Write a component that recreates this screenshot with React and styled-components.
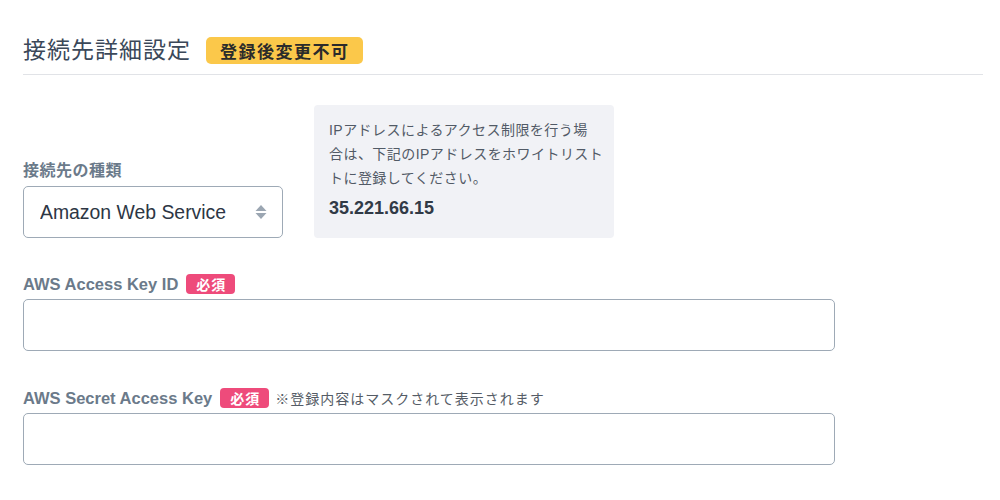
import React from "react";
import styled, { createGlobalStyle } from "styled-components";

const GlobalStyle = createGlobalStyle`
  html, body {
    margin: 0;
    padding: 0;
    background: #ffffff;
  }
  body {
    font-family: "Liberation Sans", "Noto Sans CJK JP", sans-serif;
    color: #333c48;
  }
  * { box-sizing: border-box; }
`;

const Page = styled.div`
  width: 1000px;
  height: 500px;
  padding: 35px 17px 0 23px;
  overflow: hidden;
`;

const Header = styled.div`
  display: flex;
  align-items: center;
  gap: 15px;
  padding-bottom: 9px;
  border-bottom: 1px solid #e1e3e7;
`;

const Title = styled.h2`
  margin: 0;
  font-size: 23px;
  font-weight: 400;
  line-height: 30px;
  color: #3b4859;
  letter-spacing: 1px;
`;

const Tag = styled.span`
  display: inline-flex;
  align-items: center;
  height: 27px;
  padding: 0 13px 0 14px;
  border-radius: 5px;
  font-size: 17px;
  font-weight: 700;
  letter-spacing: 1.5px;
  background: ${(p) => (p.$tone === "required" ? "#ee4b7b" : "#fbc84a")};
  color: ${(p) => (p.$tone === "required" ? "#ffffff" : "#2b2b2b")};
  ${(p) =>
    p.$tone === "required" &&
    `
    height: 20px;
    padding: 0 9px 0 10px;
    font-size: 14px;
    letter-spacing: 1px;
    border-radius: 4px;
  `}
`;

const TopRow = styled.div`
  display: flex;
  align-items: flex-end;
  gap: 31px;
  margin-top: 30px;
`;

const Field = styled.div`
  display: flex;
  flex-direction: column;
  gap: ${(p) => p.$gap || 5}px;
  width: ${(p) => p.$width || 812}px;
  margin-top: ${(p) => p.$top || 0}px;
`;

const LabelRow = styled.div`
  display: flex;
  align-items: center;
  gap: 8px;
  height: 20px;
`;

const Label = styled.label`
  font-size: ${(p) => (p.$cjk ? 16 : 16.5)}px;
  font-weight: 700;
  color: #6b7a8a;
  letter-spacing: ${(p) => (p.$cjk ? "0.5px" : "0")};
`;

const Note = styled.span`
  font-size: 14px;
  color: #555c66;
  letter-spacing: 1px;
  margin-left: -2px;
`;

const SelectWrap = styled.div`
  position: relative;
  width: 260px;
  height: 52px;
`;

const Select = styled.select`
  appearance: none;
  width: 100%;
  height: 100%;
  padding: 0 40px 0 16px;
  border: 1px solid #9eaab6;
  border-radius: 5px;
  background: #ffffff;
  font-family: "Liberation Sans", "Noto Sans CJK JP", sans-serif;
  font-size: 19.4px;
  color: #2d3644;
  outline: none;
`;

const Arrows = styled.svg`
  position: absolute;
  right: 15px;
  top: 18px;
  pointer-events: none;
`;

const InfoBox = styled.div`
  width: 300px;
  padding: 13px 15px 18px;
  background: #f1f2f6;
  border-radius: 4px;
`;

const InfoText = styled.p`
  margin: 0;
  font-size: 14px;
  line-height: 24px;
  letter-spacing: 0.45px;
  color: #515a66;
  white-space: nowrap;
`;

const Address = styled.div`
  margin-top: 6px;
  font-size: 18px;
  font-weight: 700;
  line-height: 24px;
  color: #313a46;
`;

const TextInput = styled.input`
  width: 100%;
  height: 52px;
  padding: 0 16px;
  border: 1px solid #9eaab6;
  border-radius: 5px;
  background: #ffffff;
  font-family: "Liberation Sans", "Noto Sans CJK JP", sans-serif;
  font-size: 16px;
  outline: none;
`;

export default function App() {
  return (
    <>
      <GlobalStyle />
      <Page>
        <Header>
          <Title>接続先詳細設定</Title>
          <Tag>登録後変更不可</Tag>
        </Header>

        <TopRow>
          <Field $width={260} $gap={7}>
            <LabelRow>
              <Label $cjk>接続先の種類</Label>
            </LabelRow>
            <SelectWrap>
              <Select defaultValue="aws">
                <option value="aws">Amazon Web Service</option>
                <option value="gcp">Google Cloud Platform</option>
                <option value="sftp">SFTP</option>
              </Select>
              <Arrows width="14" height="16" viewBox="0 0 14 16">
                <path d="M7 1 L12.5 7 L1.5 7 Z" fill="#9ba6b2" />
                <path d="M1.5 9 L12.5 9 L7 15 Z" fill="#9ba6b2" />
              </Arrows>
            </SelectWrap>
          </Field>

          <InfoBox>
            <InfoText>
              IPアドレスによるアクセス制限を行う場
              <br />
              合は、下記のIPアドレスをホワイトリスト
              <br />
              トに登録してください。
            </InfoText>
            <Address>35.221.66.15</Address>
          </InfoBox>
        </TopRow>

        <Field $top={36}>
          <LabelRow>
            <Label>AWS Access Key ID</Label>
            <Tag $tone="required">必須</Tag>
          </LabelRow>
          <TextInput type="text" />
        </Field>

        <Field $top={37}>
          <LabelRow>
            <Label>AWS Secret Access Key</Label>
            <Tag $tone="required">必須</Tag>
            <Note>※登録内容はマスクされて表示されます</Note>
          </LabelRow>
          <TextInput type="password" />
        </Field>
      </Page>
    </>
  );
}
